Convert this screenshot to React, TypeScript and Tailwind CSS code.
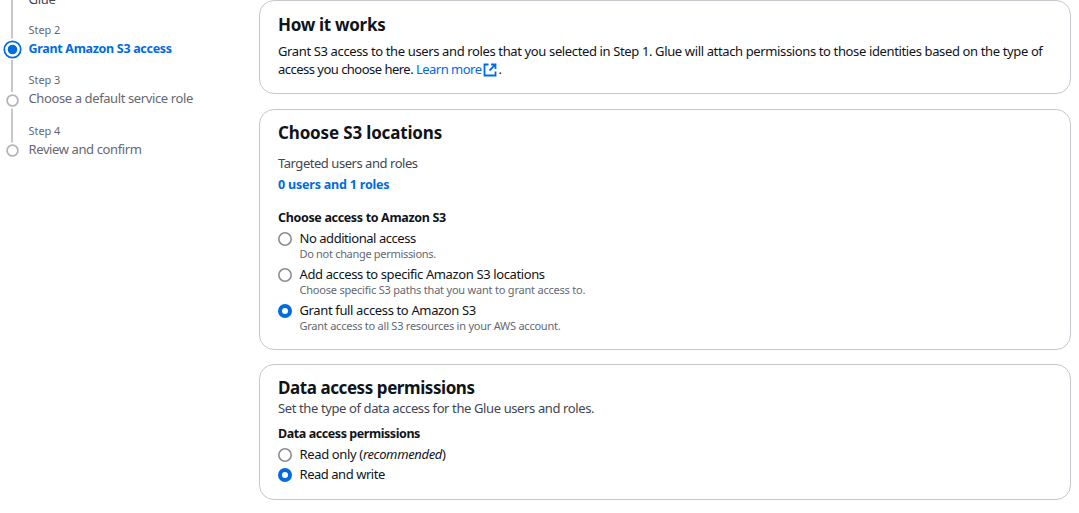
import type { ReactNode } from "react";

function Card({ className, children }: { className: string; children: ReactNode }) {
  return (
    <section className={`w-[812px] shrink-0 rounded-[15px] border border-[#c6c6cd] pl-[18px] ${className}`}>
      {children}
    </section>
  );
}

function Title({ children, className }: { children: ReactNode; className: string }) {
  return <h2 className={`text-[17px] leading-[22px] font-bold text-[#0f141a] ${className}`}>{children}</h2>;
}

function RadioMark({ checked }: { checked?: boolean }) {
  return (
    <svg className="mt-[3px] h-[14px] w-[14px] shrink-0" viewBox="0 0 14 14">
      {checked ? (
        <>
          <circle cx="7" cy="7" r="7" fill="#006ce0" />
          <circle cx="7" cy="7" r="3" fill="#fff" />
        </>
      ) : (
        <circle cx="7" cy="7" r="6.2" fill="#fff" stroke="#8c8c94" strokeWidth="1.6" />
      )}
    </svg>
  );
}

function Radio({
  checked,
  label,
  hint,
  hintClass = "",
  labelClass = "",
  className = "",
}: {
  checked?: boolean;
  label: ReactNode;
  hint?: string;
  hintClass?: string;
  labelClass?: string;
  className?: string;
}) {
  return (
    <div className={`flex items-start gap-[7.5px] ${className}`}>
      <RadioMark checked={checked} />
      <div>
        <div className={`leading-[18px] ${labelClass}`}>{label}</div>
        {hint && <div className={`text-[11px] leading-[14px] text-[#656871] ${hintClass}`}>{hint}</div>}
      </div>
    </div>
  );
}

function ExternalIcon() {
  return (
    <svg className="mr-px ml-[2px] inline-block h-[14px] w-[14px] align-[-3px]" viewBox="0 0 14 14" fill="none" stroke="#006ce0" strokeWidth="1.8">
      <path d="M5.500 1.500H1.500V12.500H12.500V8.500" />
      <path d="M8 1.500H12.500V6M12.300 1.700L6.500 7.500" />
    </svg>
  );
}

function StepText({ step, name, className, height }: { step: string; name: string; className: string; height: string }) {
  return (
    <div className={height}>
      <div className="text-[11px] leading-[16px] tracking-[-0.05px] text-[#656871]">{step}</div>
      <div className={`mt-px ${className}`}>{name}</div>
    </div>
  );
}

export default function App() {
  return (
    <div className="flex h-[513px] w-[1079px] overflow-hidden bg-white font-['Noto_Sans','Open_Sans',sans-serif] text-[13px] whitespace-nowrap text-[#0f141a]">
      <nav className="flex w-[259px] shrink-0">
        <svg className="ml-[2px] h-[160px] w-[22px] shrink-0" viewBox="0 0 22 160" fill="none">
          <path d="M10 0V38.5M10 60V92M10 108.500V142.500" stroke="#c6c6cd" strokeWidth="2" />
          <circle cx="10.500" cy="49.500" r="8.200" stroke="#006ce0" strokeWidth="1.700" />
          <circle cx="10.500" cy="49.500" r="4.800" fill="#006ce0" />
          <circle cx="10.500" cy="100.500" r="5.400" stroke="#b4b4bb" strokeWidth="1.800" />
          <circle cx="10.500" cy="150.500" r="5.400" stroke="#b4b4bb" strokeWidth="1.800" />
        </svg>
        <div className="ml-[4.5px]">
          <div className="-mt-[10px] h-[32px] leading-[18px] tracking-[-0.3px] text-[#424650]">Glue</div>
          <StepText height="h-[50px]" step="Step 2" name="Grant Amazon S3 access" className="text-[12.5px] leading-[20px] font-bold tracking-[-0.31px] text-[#006ce0]" />
          <StepText height="h-[51px]" step="Step 3" name="Choose a default service role" className="leading-[18px] tracking-[-0.39px] text-[#656871]" />
          <StepText height="h-[50px]" step="Step 4" name="Review and confirm" className="leading-[18px] tracking-[-0.39px] text-[#656871]" />
        </div>
      </nav>
      <main className="flex flex-col">
        <Card className="h-[94px] pt-[13px]">
          <Title className="tracking-[-0.3px]">How it works</Title>
          <p className="mt-[6px] leading-[18px]">
            <span className="block tracking-[-0.37px]">Grant S3 access to the users and roles that you selected in Step 1. Glue will attach permissions to those identities based on the type of</span>
            <span className="block tracking-[-0.52px]">
              access you choose here. <a className="text-[#006ce0]">Learn more<ExternalIcon /></a>.
            </span>
          </p>
        </Card>
        <Card className="mt-[15px] h-[241px] pt-[12px]">
          <Title className="tracking-[-0.16px]">Choose S3 locations</Title>
          <div className="mt-[10px] leading-[18px] tracking-[-0.46px] text-[#424650]">Targeted users and roles</div>
          <div className="mt-[3px] text-[12.5px] leading-[20px] font-bold tracking-[-0.2px] text-[#006ce0]">0 users and 1 roles</div>
          <div className="mt-[13px] text-[12.5px] leading-[20px] font-bold tracking-[-0.34px]">Choose access to Amazon S3</div>
          <Radio className="mt-px h-[36px]" label="No additional access" labelClass="tracking-[-0.45px]" hint="Do not change permissions." hintClass="tracking-[-0.31px]" />
          <Radio className="h-[36px]" label="Add access to specific Amazon S3 locations" labelClass="tracking-[-0.38px]" hint="Choose specific S3 paths that you want to grant access to." hintClass="tracking-[-0.21px]" />
          <Radio className="h-[36px]" checked label="Grant full access to Amazon S3" labelClass="tracking-[-0.36px]" hint="Grant access to all S3 resources in your AWS account." hintClass="tracking-[-0.24px]" />
        </Card>
        <Card className="mt-[14px] h-[136px] pt-[12px]">
          <Title className="tracking-[-0.43px]">Data access permissions</Title>
          <div className="leading-[18px] tracking-[-0.385px] text-[#424650]">Set the type of data access for the Glue users and roles.</div>
          <div className="mt-[7px] text-[12.5px] leading-[20px] font-bold tracking-[-0.43px]">Data access permissions</div>
          <Radio className="mt-px h-[20px]" label={<>Read only (<em>recommended</em>)</>} labelClass="tracking-[-0.35px]" />
          <Radio className="h-[20px]" checked label="Read and write" labelClass="tracking-[-0.46px]" />
        </Card>
      </main>
    </div>
  );
}
